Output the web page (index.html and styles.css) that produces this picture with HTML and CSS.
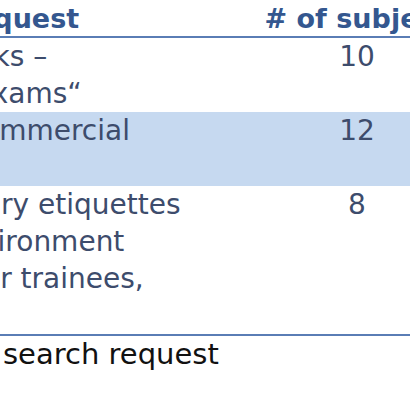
FILE: index.html
```html
<!DOCTYPE html>
<html>
<head>
<meta charset="utf-8">
<link rel="stylesheet" href="styles.css">
</head>
<body>
<div class="sheet">
  <div class="table">
    <div class="row head">
      <div class="cell left"><span class="cut c4">equest</span></div>
      <div class="cell right htitle">#&nbsp;of subjects</div>
    </div>
    <div class="row">
      <div class="cell left">
        <span class="ln cut c6">sks –</span>
        <span class="ln cut c5">exams“</span>
      </div>
      <div class="cell right num">10</div>
    </div>
    <div class="row shade">
      <div class="cell left">
        <span class="ln cut c8">ommercial</span>
        <span class="ln">&nbsp;</span>
      </div>
      <div class="cell right num">12</div>
    </div>
    <div class="row">
      <div class="cell left">
        <span class="ln cut c0">ry etiquettes</span>
        <span class="ln cut c7">vironment</span>
        <span class="ln cut c3">or trainees,</span>
        <span class="ln">&nbsp;</span>
      </div>
      <div class="cell right num">8</div>
    </div>
  </div>
  <p class="caption">search request</p>
</div>
</body>
</html>
```
FILE: styles.css
```css
html, body {
  margin: 0;
  padding: 0;
  background: #ffffff;
  overflow: hidden;
}

.sheet {
  width: 470px;
  font-family: "DejaVu Sans", sans-serif;
}

.table {
  display: flex;
  flex-direction: column;
  border-bottom: 2px solid #5a7db5;
}

.row {
  display: grid;
  grid-template-columns: 250px 214px;
  color: #3d4c6c;
  font-size: 28px;
  line-height: 37px;
}

.row.head {
  color: #34578f;
  font-weight: bold;
  font-size: 27px;
  line-height: 37px;
  height: 36px;
  border-bottom: 2px solid #5a7db5;
}

.row.shade {
  background: #c6d9f0;
}

.cell.left {
  display: flex;
  flex-direction: column;
  white-space: nowrap;
}

.cell.right {
  text-align: center;
  white-space: nowrap;
}

.cell.htitle {
  padding-left: 14px;
}

.ln {
  display: block;
}

.cut {
  display: block;
}

.c0 { margin-left: 1px; }
.c3 { margin-left: -17px; }
.c4 { margin-left: -25px; }
.c5 { margin-left: -25px; }
.c6 { margin-left: -21px; }
.c7 { margin-left: -19px; }
.c8 { margin-left: -18px; }

.caption {
  margin: 0;
  padding-left: 3px;
  color: #111111;
  font-size: 29px;
  line-height: 37px;
}
```
